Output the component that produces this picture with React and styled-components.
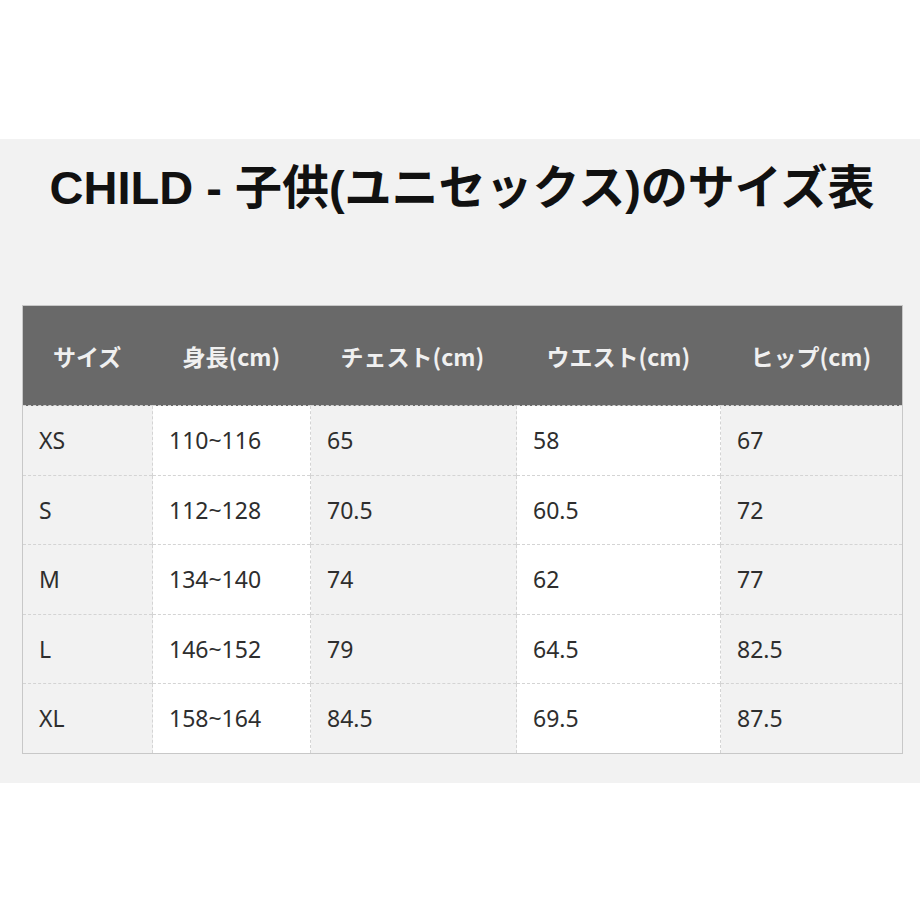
import React from 'react'
import styled, { createGlobalStyle } from 'styled-components'

const GlobalStyle = createGlobalStyle`
  html, body {
    margin: 0;
    padding: 0;
    background: #ffffff;
  }
  body {
    font-family: "Noto Sans", "Noto Sans CJK JP", sans-serif;
  }
`

const Page = styled.div`
  width: 920px;
  height: 920px;
  padding-top: 139px;
  box-sizing: border-box;
`

const Band = styled.section`
  background: #f2f2f2;
  padding: 0 18px 29px 22px;
`

const Title = styled.h1`
  margin: 0;
  height: 166px;
  display: flex;
  align-items: flex-start;
  justify-content: center;
  padding-top: 21px;
  box-sizing: border-box;
  font-family: "Liberation Sans", "Noto Sans CJK JP", sans-serif;
  font-size: 47px;
  line-height: 56px;
  font-weight: bold;
  color: #111;
  white-space: nowrap;
`

const Table = styled.table`
  width: 880px;
  border-collapse: collapse;
  table-layout: fixed;
  border: 1px solid #c8c8c8;
`

const HeadCell = styled.th`
  height: 100px;
  padding: 0 0 0 30px;
  box-sizing: border-box;
  background: #696969;
  color: #f0f0f0;
  text-align: left;
  font-family: "Noto Sans CJK JP", sans-serif;
  font-size: 23px;
  font-weight: bold;
  white-space: nowrap;
`

const Cell = styled.td`
  height: 69.5px;
  padding: 0 0 0 16px;
  box-sizing: border-box;
  background: ${p => (p.$shaded ? '#f2f2f2' : '#ffffff')};
  color: #2e2e2e;
  font-family: "Noto Sans", sans-serif;
  font-size: 23px;
  border-left: 1px dashed #d4d4d4;
  border-top: 1px dashed #d4d4d4;
  &:first-child {
    border-left: none;
  }
`

const widths = [130, 158, 206, 204, 182]
const headers = ['サイズ', '身長(cm)', 'チェスト(cm)', 'ウエスト(cm)', 'ヒップ(cm)']
const rows = [
  ['XS', '110~116', '65', '58', '67'],
  ['S', '112~128', '70.5', '60.5', '72'],
  ['M', '134~140', '74', '62', '77'],
  ['L', '146~152', '79', '64.5', '82.5'],
  ['XL', '158~164', '84.5', '69.5', '87.5']
]

export default function App() {
  return (
    <Page>
      <GlobalStyle />
      <Band>
        <Title>CHILD - 子供(ユニセックス)のサイズ表</Title>
        <Table>
          <colgroup>
            {widths.map((w, i) => <col key={i} style={{ width: w }} />)}
          </colgroup>
          <thead>
            <tr>
              {headers.map(h => <HeadCell key={h}>{h}</HeadCell>)}
            </tr>
          </thead>
          <tbody>
            {rows.map(row => (
              <tr key={row[0]}>
                {row.map((v, i) => (
                  <Cell key={i} $shaded={i % 2 === 0}>{v}</Cell>
                ))}
              </tr>
            ))}
          </tbody>
        </Table>
      </Band>
    </Page>
  )
}
